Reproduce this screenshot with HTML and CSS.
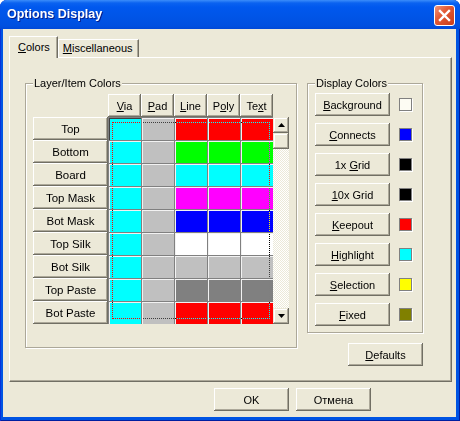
FILE: index.html
```html
<!DOCTYPE html>
<html lang="en">
<head>
  <meta charset="UTF-8" />
  <title>Options Display</title>
  <link rel="stylesheet" href="styles.css">
</head>
<body>
  <div class="window">
    <div class="titlebar">
      <span class="title">Options Display</span>
      <span class="close">
        <svg width="13" height="13" viewBox="0 0 13 13"><path d="M2 2 L11 11 M11 2 L2 11" stroke="#fff" stroke-width="2.4" stroke-linecap="square"/></svg>
      </span>
    </div>

    <div class="client">
      <div class="tabs">
        <span class="tab active"><u>C</u>olors</span>
        <span class="tab"><u>M</u>iscellaneous</span>
      </div>

      <div class="panel">
        <fieldset class="group layers">
          <legend>Layer/Item Colors</legend>
          <div class="head-row">
            <div class="corner"></div>
            <div class="btn col-head"><span><u>V</u>ia</span></div>
            <div class="btn col-head"><span><u>P</u>ad</span></div>
            <div class="btn col-head"><span><u>L</u>ine</span></div>
            <div class="btn col-head"><span>P<u>o</u>ly</span></div>
            <div class="btn col-head"><span>Te<u>x</u>t</span></div>
          </div>
          <div class="body-row">
            <div class="row-heads">
              <div class="btn row-head"><span>Top</span></div>
              <div class="btn row-head"><span>Bottom</span></div>
              <div class="btn row-head"><span>Board</span></div>
              <div class="btn row-head"><span>Top Mask</span></div>
              <div class="btn row-head"><span>Bot Mask</span></div>
              <div class="btn row-head"><span>Top Silk</span></div>
              <div class="btn row-head"><span>Bot Silk</span></div>
              <div class="btn row-head"><span>Top Paste</span></div>
              <div class="btn row-head"><span>Bot Paste</span></div>
            </div>
            <div class="cells">
              <div class="cell cyan selected"></div><div class="cell silver"></div><div class="cell red"></div><div class="cell red"></div><div class="cell red"></div>
              <div class="cell cyan"></div><div class="cell silver"></div><div class="cell lime"></div><div class="cell lime"></div><div class="cell lime"></div>
              <div class="cell cyan"></div><div class="cell silver"></div><div class="cell cyan"></div><div class="cell cyan"></div><div class="cell cyan"></div>
              <div class="cell cyan"></div><div class="cell silver"></div><div class="cell magenta"></div><div class="cell magenta"></div><div class="cell magenta"></div>
              <div class="cell cyan"></div><div class="cell silver"></div><div class="cell blue"></div><div class="cell blue"></div><div class="cell blue"></div>
              <div class="cell cyan"></div><div class="cell silver"></div><div class="cell white"></div><div class="cell white"></div><div class="cell white"></div>
              <div class="cell cyan"></div><div class="cell silver"></div><div class="cell silver"></div><div class="cell silver"></div><div class="cell silver"></div>
              <div class="cell cyan"></div><div class="cell silver"></div><div class="cell gray"></div><div class="cell gray"></div><div class="cell gray"></div>
              <div class="cell cyan"></div><div class="cell silver"></div><div class="cell red"></div><div class="cell red"></div><div class="cell red"></div>
              <div class="focus"></div>
            </div>
            <div class="scrollbar">
              <div class="sb-btn"><svg width="7" height="4" viewBox="0 0 7 4"><polygon points="3.5,0 7,4 0,4" fill="#000"/></svg></div>
              <div class="sb-btn"></div>
              <div class="sb-track"></div>
              <div class="sb-btn"><svg width="7" height="4" viewBox="0 0 7 4"><polygon points="0,0 7,0 3.5,4" fill="#000"/></svg></div>
            </div>
          </div>
        </fieldset>

        <div class="side">
          <fieldset class="group display">
            <legend>Display Colors</legend>
            <div class="pick"><div class="btn wide"><span><u>B</u>ackground</span></div><span class="swatch ivory"></span></div>
            <div class="pick"><div class="btn wide"><span><u>C</u>onnects</span></div><span class="swatch blue"></span></div>
            <div class="pick"><div class="btn wide"><span>1x <u>G</u>rid</span></div><span class="swatch black"></span></div>
            <div class="pick"><div class="btn wide"><span><u>1</u>0x Grid</span></div><span class="swatch black"></span></div>
            <div class="pick"><div class="btn wide"><span><u>K</u>eepout</span></div><span class="swatch red"></span></div>
            <div class="pick"><div class="btn wide"><span><u>H</u>ighlight</span></div><span class="swatch cyan"></span></div>
            <div class="pick"><div class="btn wide"><span><u>S</u>election</span></div><span class="swatch yellow"></span></div>
            <div class="pick"><div class="btn wide"><span><u>F</u>ixed</span></div><span class="swatch olive"></span></div>
          </fieldset>
          <div class="btn wide defaults"><span><u>D</u>efaults</span></div>
        </div>
      </div>

      <div class="actions">
        <div class="btn wide"><span>OK</span></div>
        <div class="btn wide"><span>Отмена</span></div>
      </div>
    </div>
  </div>
</body>
</html>
```

FILE: styles.css
```css
body { margin: 0; font-family: "Liberation Sans", Arial, sans-serif; font-size: 11px; color: #000; background: #fff; }
u { text-decoration: underline; text-underline-offset: 1px; }

.window { width: 460px; height: 421px; box-sizing: border-box; display: flex; flex-direction: column; background: #0054e3; border-radius: 7px 7px 0 0; overflow: hidden; box-shadow: inset 1px 0 #0831d9, inset -1px 0 #001ea0, inset 0 -1px #001ea0; }
.titlebar { height: 29px; flex: none; display: flex; align-items: flex-start; justify-content: space-between; padding: 0 5px 0 7px; background: linear-gradient(#3b8dfa 0, #0a62f0 3px, #0058ee 7px, #0054e6 18px, #0050e0 26px, #0048d8 29px); }
.title { color: #fff; font-weight: bold; font-size: 12.5px; margin-top: 7px; text-shadow: 1px 1px #0a1e8a; }
.close { margin-top: 5px; width: 19px; height: 19px; border: 1px solid #fff; border-radius: 3px; background: linear-gradient(135deg, #f0957a 0, #e35a36 40%, #c83c18 100%); display: flex; align-items: center; justify-content: center; }

.client { flex: 1; margin: 0 4px 4px 3px; background: #ece9d8; padding: 7px 4px 0 6px; display: flex; flex-direction: column; }

.tabs { display: flex; align-items: flex-end; height: 21px; position: relative; z-index: 1; }
.tab { height: 18px; line-height: 17px; padding: 0 5px 0 4px; box-sizing: border-box; border-top: 1px solid #fff; border-left: 1px solid #fff; border-right: 1px solid #716f64; box-shadow: inset -1px 0 #aca899; background: #ece9d8; }
.tab.active { height: 22px; margin-bottom: -1px; padding: 2px 7px 0 8px; line-height: 16px; }

.panel { width: 443px; height: 325px; box-sizing: border-box; border: 1px solid; border-color: #fff #716f64 #716f64 #fff; box-shadow: inset -1px -1px #aca899; display: flex; gap: 10px; padding: 19px 0 0 15px; }

.group { margin: 0; border: 1px solid #aca899; box-shadow: inset 1px 1px #fff, 1px 1px #fff; padding: 5px 7px 21px 7px; min-width: 0; }
.group legend { padding: 0 1px; line-height: 13px; background: #ece9d8; }
.layers { width: 272px; box-sizing: border-box; height: 271px; padding-top: 4px; }

.btn { background: #ece9d8; box-shadow: inset -1px -1px #716f64, inset 1px 1px #fff, inset -2px -2px #aca899; display: flex; align-items: center; justify-content: center; box-sizing: border-box; white-space: nowrap; }

.head-row { display: flex; height: 23px; }
.corner { width: 75px; }
.col-head { width: 33px; height: 23px; }

.body-row { display: flex; }
.row-heads { display: flex; flex-direction: column; }
.row-head { width: 75px; height: 23px; font-size: 11.5px; }

.cells { position: relative; display: grid; grid-template-columns: repeat(5, 32px); grid-auto-rows: 22px; gap: 1px; padding: 1px 0 0 1px; background: #808080; }
.cell { border-top: 1px solid #f2f2f2; border-left: 1px solid #f2f2f2; }
.cell.selected { border-color: #404040; }
.focus { position: absolute; left: 4px; top: 5px; width: 158px; height: 197px; box-sizing: border-box; border: 1px dotted #fff; mix-blend-mode: difference; }

.cyan { background: #00ffff; }
.silver { background: #c0c0c0; }
.red { background: #ff0000; }
.lime { background: #00ff00; }
.magenta { background: #ff00ff; }
.blue { background: #0000ff; }
.white { background: #ffffff; }
.gray { background: #808080; }
.black { background: #000000; }
.ivory { background: #fdfcf3; }
.yellow { background: #ffff00; }
.olive { background: #808000; }

.scrollbar { width: 16px; height: 207px; display: flex; flex-direction: column; }
.sb-btn { height: 16px; flex: none; background: #ece9d8; box-shadow: inset -1px -1px #716f64, inset 1px 1px #ece9d8, inset -2px -2px #aca899, inset 2px 2px #fff; display: flex; align-items: center; justify-content: center; }
.sb-track { flex: 1; background-image: conic-gradient(#fff 25%, #ece9d8 0 50%, #fff 0 75%, #ece9d8 0); background-size: 2px 2px; }

.side { display: flex; flex-direction: column; align-items: flex-end; }
.display { width: 116px; box-sizing: border-box; padding: 3px 7px 6px 7px; display: flex; flex-direction: column; gap: 7px; }
.pick { display: flex; align-items: center; gap: 9px; }
.wide { width: 75px; height: 23px; }
.swatch { width: 13px; height: 13px; box-sizing: border-box; border: 1px solid #808080; box-shadow: 1px 1px #fff; }
.defaults { margin-top: 10px; }

.actions { display: flex; justify-content: flex-end; gap: 7px; padding: 6px 81px 0 0; }
```
